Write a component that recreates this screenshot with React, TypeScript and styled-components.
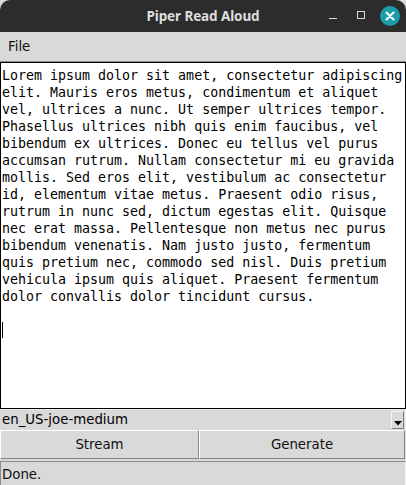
import React from "react";
import styled, { createGlobalStyle } from "styled-components";

const Global = createGlobalStyle`
  html, body { margin: 0; padding: 0; background: #ffffff; }
  * { box-sizing: border-box; }
`;

const Window = styled.div`
  width: 406px;
  height: 485px;
  display: flex;
  flex-direction: column;
  overflow: hidden;
  background: #d9d9d9;
  font-family: "DejaVu Sans", sans-serif;
  font-size: 13.33px;
  color: #000;
`;

const TitleBar = styled.div`
  height: 32px;
  flex: none;
  background: #2c2c2c;
  border-radius: 10px 10px 0 0;
  display: grid;
  grid-template-columns: 1fr auto 1fr;
  align-items: center;
`;

const Title = styled.div`
  grid-column: 2;
  font-family: "Noto Sans", sans-serif;
  font-weight: 700;
  font-size: 13.5px;
  color: #dedede;
  letter-spacing: -0.1px;
`;

const Controls = styled.div`
  grid-column: 3;
  justify-self: end;
  display: flex;
  align-items: center;
  gap: 8px;
  padding-right: 6px;
`;

const Ctl = styled.div`
  width: 20px;
  height: 20px;
  display: flex;
  align-items: center;
  justify-content: center;
`;

const CloseCtl = styled(Ctl)`
  border-radius: 50%;
  background: #1b9ca9;
  margin-left: 1px;
`;

const MenuBar = styled.div`
  height: 30px;
  flex: none;
  background: #d9d9d9;
  border-bottom: 1px solid #8c8c8c;
  display: flex;
  align-items: center;
  padding-left: 8px;
  padding-bottom: 1px;
`;

const MenuItem = styled.span`
  color: #111;
`;

const TextBox = styled.div`
  flex: 1;
  background: #fff;
  border: 1px solid #000;
  padding: 4px 1px 0 1px;
  font-family: "DejaVu Sans Mono", monospace;
  font-size: 13.3px;
  line-height: 17px;
  color: #000;
  overflow: hidden;
`;

const Line = styled.div`
  white-space: pre;
  height: 17px;
`;

const Caret = styled.span`
  display: inline-block;
  width: 1px;
  height: 16px;
  background: #000;
  vertical-align: top;
  margin-top: 0px;
`;

const Combo = styled.div`
  height: 21px;
  flex: none;
  background: #d9d9d9;
  border-top: 1px solid #ececec;
  border-right: 1px solid #f4f4f4;
  display: flex;
  align-items: center;
  padding-left: 2px;
  padding-right: 1px;
`;

const ComboText = styled.span`
  flex: 1;
  padding-bottom: 1px;
`;

const ArrowBtn = styled.div`
  width: 13px;
  height: 18px;
  border-top: 1px solid #f4f4f4;
  border-left: 1px solid #f4f4f4;
  border-right: 1px solid #7e7e7e;
  border-bottom: 1px solid #7e7e7e;
  display: flex;
  align-items: flex-end;
  justify-content: center;
  padding-bottom: 2px;
`;

const ButtonRow = styled.div`
  height: 31px;
  flex: none;
  display: grid;
  grid-template-columns: 199px 1fr;
  padding-bottom: 2px;
  padding-right: 1px;
`;

const Button = styled.div`
  height: 29px;
  background: #d9d9d9;
  border-top: 1px solid #fff;
  border-left: 1px solid #fff;
  border-right: 1px solid #868686;
  border-bottom: 1px solid #868686;
  display: flex;
  align-items: center;
  justify-content: center;
  color: #111;
  padding-bottom: 1px;
`;

const StatusBar = styled.div`
  height: 24px;
  flex: none;
  border-top: 1px solid #8c8c8c;
  border-left: 1px solid #8c8c8c;
  border-right: 1px solid #f4f4f4;
  padding-left: 1px;
  padding-top: 5px;
  line-height: 16px;
  color: #111;
`;

const lines = [
  "Lorem ipsum dolor sit amet, consectetur adipiscing",
  "elit. Mauris eros metus, condimentum et aliquet",
  "vel, ultrices a nunc. Ut semper ultrices tempor.",
  "Phasellus ultrices nibh quis enim faucibus, vel",
  "bibendum ex ultrices. Donec eu tellus vel purus",
  "accumsan rutrum. Nullam consectetur mi eu gravida",
  "mollis. Sed eros elit, vestibulum ac consectetur",
  "id, elementum vitae metus. Praesent odio risus,",
  "rutrum in nunc sed, dictum egestas elit. Quisque",
  "nec erat massa. Pellentesque non metus nec purus",
  "bibendum venenatis. Nam justo justo, fermentum",
  "quis pretium nec, commodo sed nisl. Duis pretium",
  "vehicula ipsum quis aliquet. Praesent fermentum",
  "dolor convallis dolor tincidunt cursus.",
  "",
];

export default function App() {
  return (
    <>
      <Global />
      <Window>
        <TitleBar>
          <Title>Piper Read Aloud</Title>
          <Controls>
            <Ctl>
              <svg width="10" height="10" viewBox="0 0 10 10">
                <rect x="1" y="7" width="8" height="1" fill="#dcdcdc" />
              </svg>
            </Ctl>
            <Ctl>
              <svg width="10" height="10" viewBox="0 0 10 10">
                <rect x="1.5" y="0.5" width="7" height="7" fill="none" stroke="#dcdcdc" strokeWidth="1" />
              </svg>
            </Ctl>
            <CloseCtl>
              <svg width="10" height="10" viewBox="0 0 10 10">
                <path d="M1.5 1.5 L8.5 8.5 M8.5 1.5 L1.5 8.5" stroke="#fff" strokeWidth="2" strokeLinecap="round" />
              </svg>
            </CloseCtl>
          </Controls>
        </TitleBar>
        <MenuBar>
          <MenuItem>File</MenuItem>
        </MenuBar>
        <TextBox>
          {lines.map((l, i) => (
            <Line key={i}>{l}</Line>
          ))}
          <Line>
            <Caret />
          </Line>
        </TextBox>
        <Combo>
          <ComboText>en_US-joe-medium</ComboText>
          <ArrowBtn>
            <svg width="8" height="5" viewBox="0 0 8 5">
              <path d="M0 0 H8 L4 4.5 Z" fill="#000" />
            </svg>
          </ArrowBtn>
        </Combo>
        <ButtonRow>
          <Button>Stream</Button>
          <Button>Generate</Button>
        </ButtonRow>
        <StatusBar>Done.</StatusBar>
      </Window>
    </>
  );
}
